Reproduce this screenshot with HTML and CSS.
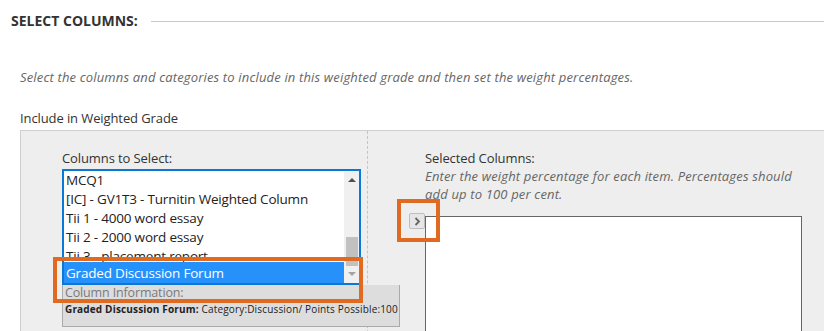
FILE: index.html
```html
<html>
    <head>
        <title>Select Columns</title>
        <link rel="stylesheet" href="styles.css">
    </head>
    <body>
        <div class='section-head'>
            <h2>SELECT COLUMNS:</h2>
            <div class='head-rule'></div>
        </div>
        <p class='instructions'>Select the columns and categories to include in this weighted grade and then set the weight percentages.</p>
        <div class='field-label'>Include in Weighted Grade</div>

        <div class='picker'>
            <div class='picker-left'>
                <div class='col-label'>Columns to Select:</div>
                <div class='listbox'>
                    <div class='options'>
                        <div class='option'>MCQ1</div>
                        <div class='option'>[IC] - GV1T3 - Turnitin Weighted Column</div>
                        <div class='option'>Tii 1 - 4000 word essay</div>
                        <div class='option'>Tii 2 - 2000 word essay</div>
                        <div class='option cut'>Tii 3 - placement report</div>
                        <div class='option selected'>Graded Discussion Forum</div>
                    </div>
                    <div class='scrollbar'>
                        <div class='arrow up'></div>
                        <div class='track'><div class='thumb'></div></div>
                        <div class='arrow down'></div>
                    </div>
                </div>
                <div class='col-info'>
                    <div class='info-title'>Column Information:</div>
                    <div class='info-text'><b>Graded Discussion Forum:</b> Category:Discussion/ Points Possible:100</div>
                </div>
            </div>
            <div class='picker-right'>
                <div class='mover'>
                    <button class='move-btn'>
                        <svg width="7" height="9" viewBox="0 0 7 9"><path d="M1.5 1 L5 4.5 L1.5 8" fill="none" stroke="#666" stroke-width="1.8"/></svg>
                    </button>
                </div>
                <div class='selected-side'>
                    <div class='col-label tight'>Selected Columns:</div>
                    <div class='hint'>Enter the weight percentage for each item. Percentages should add up to 100 per cent.</div>
                    <div class='selected-box'></div>
                </div>
            </div>
        </div>

        <div class='mark mark-list'></div>
        <div class='mark mark-btn'></div>
    </body>
</html>
```

FILE: styles.css
```css
body{
    margin: 0;
    font-family: "Open Sans", "Liberation Sans", sans-serif;
    font-size: 13px;
    color: #333;
    background: #fff;
    overflow: hidden;
    position: relative;
    height: 331px;
}

.section-head{
    display: flex;
    align-items: center;
    padding: 11px 0 0 11px;
}
.section-head h2{
    margin: 0;
    font-size: 14px;
    font-weight: 700;
    line-height: 20px;
    color: #333;
}
.head-rule{
    flex: 1;
    height: 1px;
    background: #c8c8c8;
    margin-left: 13px;
}

.instructions{
    margin: 36px 0 0 20px;
    font-style: italic;
    color: #666;
    line-height: 20px;
    letter-spacing: 0.16px;
}
.field-label{
    margin: 21px 0 0 20px;
    line-height: 20px;
    color: #333;
    letter-spacing: -0.1px;
}

.picker{
    margin: 2px 0 0 20px;
    border-top: 1px solid #cfcfcf;
    border-left: 1px solid #cfcfcf;
    background: #eeeeee;
    display: grid;
    grid-template-columns: 347px auto;
    height: 220px;
}

.picker-left{
    border-right: 1px dashed #c4c4c4;
    padding: 17px 0 0 41px;
}
.col-label{
    line-height: 20px;
    color: #333;
    letter-spacing: -0.1px;
}
.col-label.tight{
    line-height: 18px;
}

.listbox{
    margin-top: 1px;
    width: 295px;
    border: 2px solid #0a78d7;
    background: #fff;
    display: flex;
}
.options{
    flex: 1;
    font-size: 13.5px;
    color: #222;
    letter-spacing: -0.2px;
}
.option{
    height: 19px;
    line-height: 19px;
    padding-left: 2px;
    white-space: nowrap;
    overflow: hidden;
}
.option.cut{
    height: 15px;
}
.option.selected{
    height: 21px;
    line-height: 22px;
    background: #2691fb;
    color: #fff;
}

.scrollbar{
    width: 15px;
    background: #f0f0f0;
    display: flex;
    flex-direction: column;
    align-items: center;
}
.arrow{
    width: 0;
    height: 0;
    border-left: 4px solid transparent;
    border-right: 4px solid transparent;
}
.arrow.up{
    margin: 7px 0 6px;
    border-bottom: 4px solid #505050;
}
.arrow.down{
    margin: 6px 0 7px;
    border-top: 4px solid #a3a3a3;
}
.track{
    flex: 1;
    width: 100%;
    display: flex;
    flex-direction: column;
    justify-content: flex-end;
}
.thumb{
    height: 29px;
    margin: 0 1px 0 2px;
    background: #c1c1c1;
}

.col-info{
    width: 334px;
    height: 41px;
    border: 1px solid #aaa;
    border-top: none;
    background: #dddddd;
    position: relative;
    padding-left: 2px;
}
.info-title{
    color: #7a7a7a;
    font-size: 12.5px;
    line-height: 16px;
    letter-spacing: -0.15px;
}
.info-text{
    margin-top: 1px;
    font-size: 10px;
    line-height: 14px;
    color: #222;
    white-space: nowrap;
    letter-spacing: 0.16px;
}

.picker-right{
    display: flex;
    padding: 0 22px 0 41px;
}
.mover{
    width: 16px;
    padding-top: 82px;
}
.move-btn{
    width: 16px;
    height: 16px;
    padding: 0;
    border: 1px solid #bdbdbd;
    border-radius: 2px;
    background: #e6e6e6;
    display: flex;
    align-items: center;
    justify-content: center;
}
.selected-side{
    flex: 1;
    padding-top: 18px;
}
.hint{
    font-style: italic;
    color: #666;
    line-height: 18px;
    padding-right: 4px;
    letter-spacing: 0.16px;
}
.selected-box{
    margin-top: 13px;
    height: 160px;
    border: 1px solid #666;
    background: #fff;
}

.mark{
    position: absolute;
    border: 4px solid #e06a1f;
}
.mark-list{
    left: 53px;
    top: 257px;
    width: 302px;
    height: 38px;
}
.mark-btn{
    left: 397px;
    top: 199px;
    width: 35px;
    height: 35px;
}
```
